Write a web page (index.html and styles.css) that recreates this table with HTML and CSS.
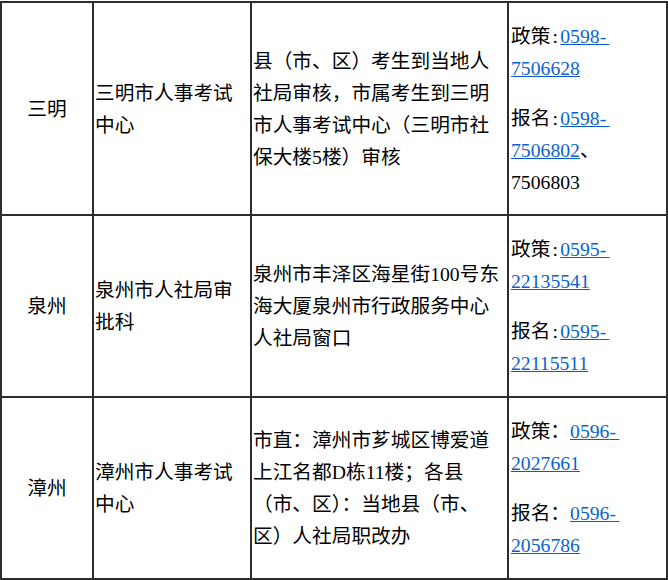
FILE: index.html
```html
<!DOCTYPE html>
<html lang="zh-CN">
<head>
<meta charset="utf-8">
<title>审核地点</title>
<link rel="stylesheet" href="styles.css">
</head>
<body>
<div class="grid">
  <div class="cell city">三明</div>
  <div class="cell">三明市人事考试<br>中心</div>
  <div class="cell">县（市、区）考生到当地人<br>社局审核，市属考生到三明<br>市人事考试中心（三明市社<br>保大楼5楼）审核</div>
  <div class="cell tel">
    <div class="tel-item">政策<span class="colon">:</span><a href="#">0598<span class="dash">-</span><br>7506628</a></div>
    <div class="tel-item">报名<span class="colon">:</span><a href="#">0598<span class="dash">-</span><br>7506802</a>、<br>7506803</div>
  </div>

  <div class="cell city">泉州</div>
  <div class="cell">泉州市人社局审<br>批科</div>
  <div class="cell">泉州市丰泽区海星街100号东<br>海大厦泉州市行政服务中心<br>人社局窗口</div>
  <div class="cell tel">
    <div class="tel-item">政策<span class="colon">:</span><a href="#">0595<span class="dash">-</span><br>22135541</a></div>
    <div class="tel-item">报名<span class="colon">:</span><a href="#">0595<span class="dash">-</span><br>22115511</a></div>
  </div>

  <div class="cell city">漳州</div>
  <div class="cell">漳州市人事考试<br>中心</div>
  <div class="cell">市直：漳州市芗城区博爱道<br>上江名都D栋11楼；各县<br>（市、区）：当地县（市、<br>区）人社局职改办</div>
  <div class="cell tel">
    <div class="tel-item">政策：<a href="#">0596<span class="dash">-</span><br>2027661</a></div>
    <div class="tel-item">报名：<a href="#">0596<span class="dash">-</span><br>2056786</a></div>
  </div>
</div>
</body>
</html>
```

FILE: styles.css
```css
html, body {
  margin: 0;
  padding: 0;
  background: #ffffff;
}

body {
  padding-top: 1px;
  font-family: "Liberation Serif", "Noto Sans CJK SC", serif;
  font-size: 19.7px;
  line-height: 32px;
  color: #000000;
}

.grid {
  display: grid;
  grid-template-columns: 92px 158px 257px 159px;
  grid-template-rows: 213px 182px 182px;
  width: 668px;
  box-sizing: border-box;
  border-left: 2px solid #2d2d2d;
  border-top: 2px solid #2d2d2d;
}

.cell {
  box-sizing: border-box;
  border-right: 2px solid #2d2d2d;
  border-bottom: 2px solid #2d2d2d;
  display: flex;
  flex-direction: column;
  justify-content: center;
  padding: 0 2px 0 1px;
  white-space: nowrap;
}

.city {
  align-items: center;
  padding: 0;
}

.tel {
  padding-left: 2px;
}

.tel-item + .tel-item {
  margin-top: 18px;
}

.colon {
  padding-left: 2px;
  letter-spacing: 2.4px;
}

.dash {
  letter-spacing: 3.3px;
}

.tel a {
  color: #0a63cc;
  text-decoration: underline;
  text-decoration-color: #0a5cc4;
}
```
